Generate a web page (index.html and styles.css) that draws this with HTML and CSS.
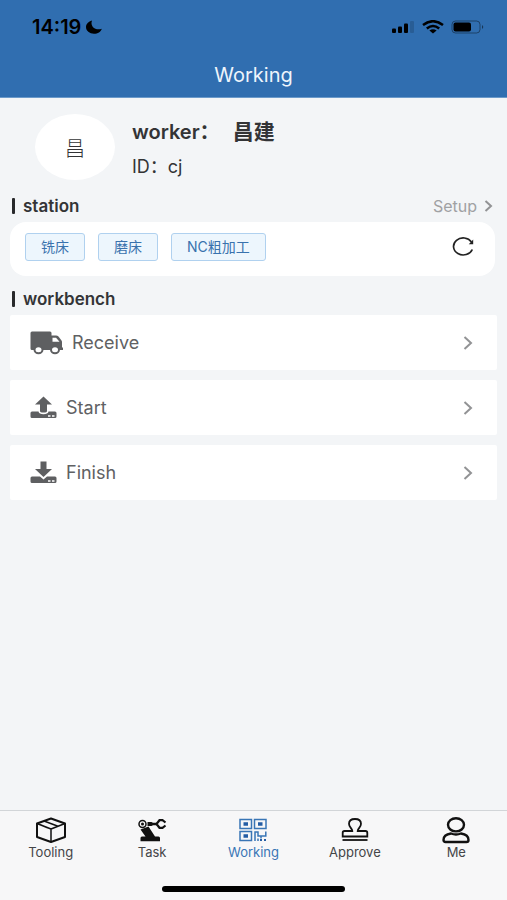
FILE: index.html
```html
<!DOCTYPE html>
<html lang="en">
<head>
<meta charset="utf-8">
<meta name="viewport" content="width=device-width, initial-scale=1">
<title>Working</title>
<link rel="stylesheet" href="styles.css">
</head>
<body>
<header class="header">
  <div class="status">
    <div class="clock">
      <span>14:19</span>
      <svg width="16" height="14" viewBox="0 0 16 14" aria-hidden="true"><path d="M6 0.500C2.500 1.500 0 4 0 7C0 10.800 3.600 13.700 8 13.700C11.800 13.700 15 11.800 15.800 8.700C10.500 11 3.500 7 6 .5Z"/></svg>
    </div>
    <div class="signals">
      <svg width="23" height="14" viewBox="0 0 23 14" aria-hidden="true"><rect x="0" y="8.500" width="4" height="4.500" rx="1"/><rect x="6" y="6.500" width="4" height="6.500" rx="1"/><rect x="12" y="3.500" width="4" height="9.500" rx="1"/><rect x="18" y="1" width="4" height="12" rx="1" opacity=".15"/></svg>
      <svg width="22" height="14" viewBox="0 0 22 14" aria-hidden="true"><g fill="none" stroke="#000" stroke-width="2.500"><path d="M1 5Q11-2.600 21 5"/><path d="M4.800 8.500Q11 3.500 17.200 8.500"/></g><path d="M7.400 10.600Q11 8 14.600 10.600L11 13.600Z"/></svg>
      <svg width="34" height="14" viewBox="0 0 34 14" aria-hidden="true"><rect x="1" y="1" width="28" height="12" rx="3.500" fill="none" stroke="#000" stroke-opacity=".4"/><rect x="2.500" y="2.500" width="17.500" height="9" rx="2"/><path d="M31 5Q33.500 7 31 9Z" opacity=".5"/></svg>
    </div>
  </div>
  <h1 class="title">Working</h1>
</header>

<main class="content">
  <section class="profile">
    <div class="avatar">昌</div>
    <div>
      <p class="worker">worker： <span class="name">昌建</span></p>
      <p class="worker-id">ID：cj</p>
    </div>
  </section>

  <div class="section-head">
    <h2>station</h2>
    <a class="setup" href="#setup">Setup
      <svg width="9" height="12" viewBox="0 0 9 12" aria-hidden="true"><path d="M1.500 1L7 6L1.500 11"/></svg>
    </a>
  </div>
  <section class="stations">
    <button class="tag" type="button">铣床</button>
    <button class="tag" type="button">磨床</button>
    <button class="tag" type="button">NC粗加工</button>
    <button class="refresh" type="button" aria-label="Refresh">
      <svg width="24" height="20" viewBox="0 0 24 20" aria-hidden="true"><path d="M20.500 5A9.700 8.500 0 1 0 21.300 12.500" fill="none" stroke="#222" stroke-width="1.700"/><path d="M22.200 2.600V7.300H17.800Z" fill="#222"/></svg>
    </button>
  </section>

  <div class="section-head">
    <h2>workbench</h2>
  </div>
  <nav class="bench">
    <a class="row" href="#receive">
      <svg width="33" height="24" viewBox="0 0 33 24" aria-hidden="true"><path d="M2 .500H20Q21.500.500 21.500 2V4.500H26Q27.500 4.500 28.500 5.500L31.500 9.500Q32 10 32 11V16.500H33V19H2Q.500 19 .500 17.500V2Q.500.500 2 .500Z"/><path d="M22.500 6.700H26L29.500 10.800H22.500Z" fill="#fff"/><g fill="#fff" stroke="#5e5f61" stroke-width="2"><ellipse cx="8.500" cy="18.700" rx="4" ry="3.500"/><ellipse cx="25" cy="18.700" rx="4" ry="3.500"/></g></svg>
      <span>Receive</span>
      <svg class="chevron" width="10" height="14" viewBox="0 0 10 14" aria-hidden="true"><path d="M1.500 1L8 7L1.500 13"/></svg>
    </a>
    <a class="row" href="#start">
      <svg width="27" height="24" viewBox="0 0 27 24" aria-hidden="true"><path d="M13.500.500L22 8.500H17V15Q17 16.500 13.500 16.500T10 15V8.500H5Z"/><path d="M2 15.500H8.500Q9 18.200 13.500 18.200T18.500 15.500H25Q26.500 15.500 26.500 17V20.500Q26.500 22 25 22H2Q.500 22 .500 20.500V17Q.500 15.500 2 15.500Z"/><path d="M18 19.200H20.500V20.700H18ZM22 19.200H24.500V20.700H22Z" fill="#fff"/></svg>
      <span>Start</span>
      <svg class="chevron" width="10" height="14" viewBox="0 0 10 14" aria-hidden="true"><path d="M1.500 1L8 7L1.500 13"/></svg>
    </a>
    <a class="row" href="#finish">
      <svg width="27" height="24" viewBox="0 0 27 24" aria-hidden="true"><path d="M10.500.500H16.500V8H22L13.500 16L5 8H10.500Z"/><path d="M2 15.500H10L13.500 18.600L17 15.500H25Q26.500 15.500 26.500 17V20.500Q26.500 22 25 22H2Q.500 22 .500 20.500V17Q.500 15.500 2 15.500Z"/><path d="M18 19.200H20.500V20.700H18ZM22 19.200H24.500V20.700H22Z" fill="#fff"/></svg>
      <span>Finish</span>
      <svg class="chevron" width="10" height="14" viewBox="0 0 10 14" aria-hidden="true"><path d="M1.500 1L8 7L1.500 13"/></svg>
    </a>
  </nav>
</main>

<footer class="footer">
  <nav class="tabs">
    <a class="tab" href="#tooling">
      <svg width="30" height="28" viewBox="0 0 30 28" aria-hidden="true"><g fill="none" stroke="#111" stroke-linejoin="round"><path d="M15 2.500L29 7.500V21L15 26L1 21V7.500Z" stroke-width="2"/><path d="M1 7.500L15 13L29 7.500M15 13V25.500M8 5L22 10.300M5.500 9.300L11.500 11.700" stroke-width="1.500"/></g></svg>
      <span>Tooling</span>
    </a>
    <a class="tab" href="#task">
      <svg width="30" height="28" viewBox="0 0 30 28" aria-hidden="true"><circle cx="5.500" cy="8" r="3.500" fill="none" stroke="#111" stroke-width="1.500"/><circle cx="5.500" cy="8" r="1.500" fill="#111"/><path d="M3.500 13.500L11.500 10.500L18 20.500H21.500Q23 20.500 23 22V25.300H3.500V22Q3.500 20.500 5 20.500H8.500Z" fill="#111"/><path d="M10.500 6H14.500L16 6.800H20V9.200H16L14.500 10H10.500Z" fill="#111"/><path d="M28.500 6.500L25.500 4.200H22.500L19.500 8L22.500 11.800H25.500L28.500 9.500" fill="none" stroke="#111" stroke-width="2.200"/></svg>
      <span>Task</span>
    </a>
    <a class="tab active" href="#working" aria-current="page">
      <svg width="30" height="28" viewBox="0 0 30 28" aria-hidden="true"><g fill="none" stroke="#3975b5" stroke-width="1.500"><rect x="2" y="3.500" width="11.500" height="9"/><rect x="16.500" y="3.500" width="11.500" height="9"/><rect x="2" y="15.500" width="11.500" height="9"/><path d="M17 25V16H20V20H23M27.800 15.500V20H23V22.500M20 22.500V25"/></g><path d="M5.500 6.200H10V9.800H5.500ZM20 6.200H24.500V9.800H20ZM5.500 18.200H10V21.800H5.500ZM22 23H24V25H22ZM26 23H28V25H26Z" fill="#245da4"/></svg>
      <span>Working</span>
    </a>
    <a class="tab" href="#approve">
      <svg width="30" height="28" viewBox="0 0 30 28" aria-hidden="true"><path d="M12.300 15C12.300 12 9 11.500 9 7.800C9 4.700 11.500 3 15 3S21 4.700 21 7.800C21 11.500 17.700 12 17.700 15H25.500Q27.300 15 27.300 16.800V20.500H2.700V16.800Q2.700 15 4.500 15Z" fill="none" stroke="#111" stroke-width="1.800"/><path d="M2.500 24H27.500" stroke="#111" stroke-width="1.800"/></svg>
      <span>Approve</span>
    </a>
    <a class="tab" href="#me">
      <svg width="30" height="28" viewBox="0 0 30 28" aria-hidden="true"><g fill="none" stroke="#111" stroke-width="2.400"><ellipse cx="15" cy="8.800" rx="8" ry="6.600"/><path d="M10 17.500Q15 19.500 20 17.500Q27.500 18.500 27.500 24Q27.500 26 25.500 26H4.500Q2.500 26 2.500 24Q2.500 18.500 10 17.500Z"/></g></svg>
      <span>Me</span>
    </a>
  </nav>
  <div class="home-bar"></div>
</footer>
</body>
</html>
```

FILE: styles.css
```css
* { box-sizing: border-box; }

body {
  margin: 0;
  min-height: 100vh;
  display: flex;
  flex-direction: column;
  background: #f3f5f7;
  color: #333436;
  font-family: Inter, "Noto Sans CJK SC", sans-serif;
}

h1, h2, p { margin: 0; }
a { color: inherit; text-decoration: none; }
svg { display: block; flex: none; }
button { font: inherit; cursor: pointer; }

.header {
  background: #306eb0;
  border-bottom: 1px solid #6b9aca;
}
.status {
  display: flex;
  justify-content: space-between;
  align-items: center;
  height: 54px;
  padding: 0 22px 0 32px;
  color: #000;
}
.clock {
  display: flex;
  align-items: center;
  gap: 5px;
  font-size: 20px;
  font-weight: 600;
}
.signals {
  display: flex;
  align-items: center;
  gap: 7px;
}
.title {
  padding: 5px 0 6px;
  color: #eef5fc;
  font-size: 20px;
  line-height: 32px;
  font-weight: 400;
  text-align: center;
}

.content {
  flex: 1;
  padding: 16px 10px;
}
.profile {
  display: flex;
  align-items: flex-start;
  gap: 17px;
  padding-left: 25px;
  margin-bottom: 8px;
}
.avatar {
  display: grid;
  place-items: center;
  width: 80px;
  height: 66px;
  border-radius: 50%;
  background: #fff;
  font-size: 20px;
  font-weight: 300;
}
.worker {
  font-size: 20px;
  line-height: 36px;
  font-weight: 600;
}
.name {
  margin-left: 8px;
  font-size: 21px;
}
.worker-id {
  font-size: 18px;
  line-height: 34px;
}

.section-head {
  display: flex;
  justify-content: space-between;
  align-items: center;
  height: 28px;
  padding: 0 4px 0 2px;
}
.section-head h2 {
  display: flex;
  align-items: center;
  gap: 8px;
  font-size: 17px;
  font-weight: 600;
}
.section-head h2::before {
  content: "";
  width: 3px;
  height: 16px;
  border-radius: 1px;
  background: #28292b;
}
.setup {
  display: flex;
  align-items: center;
  gap: 7px;
  color: #a0a1a3;
  font-size: 16px;
}
.setup path,
.chevron path {
  fill: none;
  stroke: #929395;
  stroke-width: 2;
}

.stations {
  display: flex;
  align-items: center;
  gap: 13px;
  height: 54px;
  margin: 2px 2px 9px 0;
  padding: 0 20px 4px 15px;
  border-radius: 16px;
  background: #fff;
}
.tag {
  height: 28px;
  padding: 0 15px;
  border: 1px solid #b0d1ef;
  border-radius: 3px;
  background: #edf6fd;
  color: #3972ad;
  font-size: 14px;
  line-height: 24px;
}
.refresh {
  margin-left: auto;
  padding: 0;
  border: 0;
  background: none;
}

.bench {
  display: grid;
  gap: 10px;
  margin-top: 2px;
}
.row {
  display: flex;
  align-items: center;
  gap: 9px;
  height: 55px;
  padding: 0 24px 0 20px;
  border-radius: 2px;
  background: #fff;
  color: #606163;
  font-size: 18px;
}
.row svg { fill: #5e5f61; }
.row .chevron { margin-left: auto; }

.footer {
  border-top: 1px solid #d2d5d8;
  background: #f7f7f8;
}
.tabs {
  display: grid;
  grid-template-columns: repeat(5, 1fr);
  height: 75px;
  padding-top: 5px;
}
.tab {
  display: flex;
  flex-direction: column;
  align-items: center;
  color: #444547;
  font-size: 13px;
  line-height: 16px;
}
.tab.active { color: #3975b5; }
.home-bar {
  width: 36%;
  height: 6px;
  margin: 0 auto 8px;
  border-radius: 3px;
  background: #000;
}
```
